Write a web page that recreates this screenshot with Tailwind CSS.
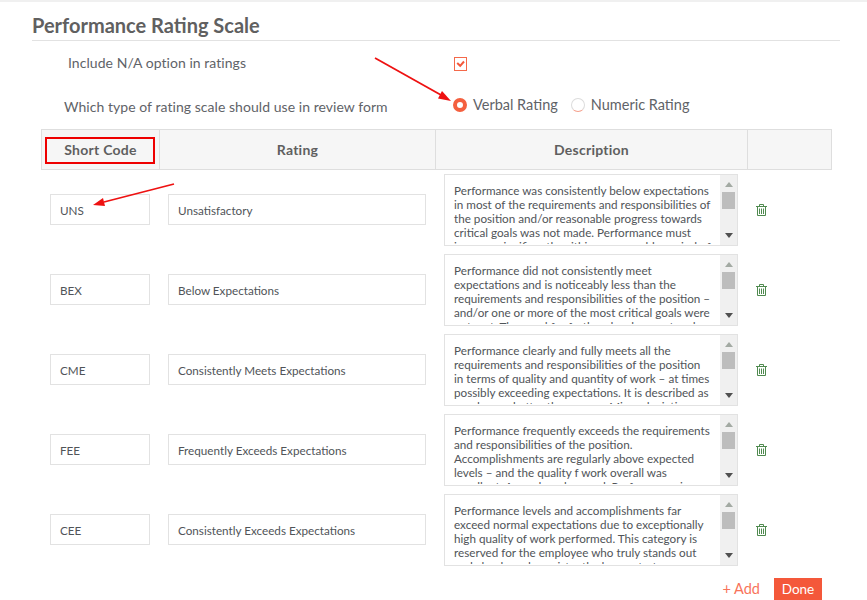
<!DOCTYPE html>
<html lang="en">
<head>
<meta charset="utf-8">
<title>Performance Rating Scale</title>
<script src="https://cdn.jsdelivr.net/npm/@tailwindcss/browser@4"></script>
</head>
<body class="bg-white font-['Lato','Open_Sans',sans-serif] text-[#5f6368]">
<div class="relative w-[867px] h-[600px] overflow-hidden">
  <div class="h-[2px] bg-[#f0f0f0]"></div>
  <div class="pl-[32px] pr-[27px]">
    <h1 class="h-[39px] pt-[8px] border-b border-[#e2e2e2] text-[20px] leading-[30px] font-bold text-[#606060]">Performance Rating Scale</h1>
  </div>
  <div class="flex h-[44px] items-start pt-[12px]">
    <div class="w-[454px] pl-[68px] text-[14px] tracking-[0.05px] leading-[20px]">Include N/A option in ratings</div>
    <div class="mt-[4px] w-[13px] h-[14px] border border-[#f4694a] flex items-center justify-center">
      <svg width="9" height="8" viewBox="0 0 9 8"><path d="M1.2 3 L4.2 5.8 L8 1.5" fill="none" stroke="#f4583a" stroke-width="2"/></svg>
    </div>
  </div>
  <div class="flex h-[44px] items-start">
    <div class="w-[453px] pl-[64px] pt-[12px] text-[14px] tracking-[0.05px] leading-[20px]">Which type of rating scale should use in review form</div>
    <div class="flex items-center pt-[10px] text-[14.5px] leading-[20px]">
      <span class="w-[14px] h-[14px] rounded-full border-[4px] border-[#f4603f] bg-white"></span>
      <span class="ml-[6px]">Verbal Rating</span>
      <span class="ml-[13px] w-[14px] h-[14px] rounded-full border border-[#dcdcdc] border-b-[#f4a08c] bg-white"></span>
      <span class="ml-[6px]">Numeric Rating</span>
    </div>
  </div>
  <div class="ml-[41px] w-[791px] h-[41px] flex border border-[#dedede] bg-[#f6f6f6] text-[14px] font-bold tracking-[0.25px] text-[#5f5f5f]">
    <div class="w-[118px] flex items-center justify-center border-r border-[#dedede]">Short Code</div>
    <div class="w-[276px] flex items-center justify-center border-r border-[#dedede]">Rating</div>
    <div class="w-[312px] flex items-center justify-center border-r border-[#dedede]">Description</div>
    <div class="flex-1"></div>
  </div>

  <div class="pt-[4px] flex flex-col gap-[8px]">
    <!-- row 1 -->
    <div class="flex items-center h-[72px] text-[11.7px] text-[#505458]">
      <div class="ml-[50px] -mt-[1px] w-[100px] h-[31px] border border-[#e2e2e2] pl-[9px] leading-[30px]">UNS</div>
      <div class="ml-[18px] -mt-[1px] w-[258px] h-[31px] border border-[#e2e2e2] pl-[9px] leading-[30px]">Unsatisfactory</div>
      <div class="ml-[18px] w-[294px] h-[72px] border border-[#e2e2e2] flex">
        <div class="flex-1 mb-[1px] overflow-hidden pl-[9px] pt-[8px] leading-[14px] whitespace-nowrap">Performance was consistently below expectations<br>in most of the requirements and responsibilities of<br>the position and/or reasonable progress towards<br>critical goals was not made. Performance must<br>improve significantly within a reasonable period of</div>
        <div class="w-[17px] bg-[#f0f0f0] relative flex flex-col items-center pt-[7px]">
          <svg width="8" height="5" viewBox="0 0 8 5"><path d="M4 0 L8 5 L0 5 Z" fill="#a3aaa3"/></svg>
          <div class="mt-[5px] w-[13px] h-[17px] bg-[#bdbdbd]"></div>
          <svg class="absolute bottom-[7px]" width="8" height="5" viewBox="0 0 8 5"><path d="M0 0 L8 0 L4 5 Z" fill="#505050"/></svg>
        </div>
      </div>
      <svg class="ml-[18px]" width="11" height="12" viewBox="0 0 11 12" fill="none" stroke="#4f8a4f" stroke-width="1"><path d="M0 2.5H11M3.5 2.5V0.5H7.5V2.5M1.5 2.5V11.5H9.5V2.5M3.5 4.5V10M5.5 4.5V10M7.5 4.5V10"/></svg>
    </div>
    <!-- row 2 -->
    <div class="flex items-center h-[72px] text-[11.7px] text-[#505458]">
      <div class="ml-[50px] -mt-[1px] w-[100px] h-[31px] border border-[#e2e2e2] pl-[9px] leading-[30px]">BEX</div>
      <div class="ml-[18px] -mt-[1px] w-[258px] h-[31px] border border-[#e2e2e2] pl-[9px] leading-[30px]">Below Expectations</div>
      <div class="ml-[18px] w-[294px] h-[72px] border border-[#e2e2e2] flex">
        <div class="flex-1 mb-[1px] overflow-hidden pl-[9px] pt-[8px] leading-[14px] whitespace-nowrap">Performance did not consistently meet<br>expectations and is noticeably less than the<br>requirements and responsibilities of the position –<br>and/or one or more of the most critical goals were<br>not met. The need for further development and</div>
        <div class="w-[17px] bg-[#f0f0f0] relative flex flex-col items-center pt-[7px]">
          <svg width="8" height="5" viewBox="0 0 8 5"><path d="M4 0 L8 5 L0 5 Z" fill="#a3aaa3"/></svg>
          <div class="mt-[5px] w-[13px] h-[17px] bg-[#bdbdbd]"></div>
          <svg class="absolute bottom-[7px]" width="8" height="5" viewBox="0 0 8 5"><path d="M0 0 L8 0 L4 5 Z" fill="#505050"/></svg>
        </div>
      </div>
      <svg class="ml-[18px]" width="11" height="12" viewBox="0 0 11 12" fill="none" stroke="#4f8a4f" stroke-width="1"><path d="M0 2.5H11M3.5 2.5V0.5H7.5V2.5M1.5 2.5V11.5H9.5V2.5M3.5 4.5V10M5.5 4.5V10M7.5 4.5V10"/></svg>
    </div>
    <!-- row 3 -->
    <div class="flex items-center h-[72px] text-[11.7px] text-[#505458]">
      <div class="ml-[50px] -mt-[1px] w-[100px] h-[31px] border border-[#e2e2e2] pl-[9px] leading-[30px]">CME</div>
      <div class="ml-[18px] -mt-[1px] w-[258px] h-[31px] border border-[#e2e2e2] pl-[9px] leading-[30px]">Consistently Meets Expectations</div>
      <div class="ml-[18px] w-[294px] h-[72px] border border-[#e2e2e2] flex">
        <div class="flex-1 mb-[1px] overflow-hidden pl-[9px] pt-[8px] leading-[14px] whitespace-nowrap">Performance clearly and fully meets all the<br>requirements and responsibilities of the position<br>in terms of quality and quantity of work – at times<br>possibly exceeding expectations. It is described as<br>good as, or better than, peers. Minor deviations</div>
        <div class="w-[17px] bg-[#f0f0f0] relative flex flex-col items-center pt-[7px]">
          <svg width="8" height="5" viewBox="0 0 8 5"><path d="M4 0 L8 5 L0 5 Z" fill="#a3aaa3"/></svg>
          <div class="mt-[5px] w-[13px] h-[17px] bg-[#bdbdbd]"></div>
          <svg class="absolute bottom-[7px]" width="8" height="5" viewBox="0 0 8 5"><path d="M0 0 L8 0 L4 5 Z" fill="#505050"/></svg>
        </div>
      </div>
      <svg class="ml-[18px]" width="11" height="12" viewBox="0 0 11 12" fill="none" stroke="#4f8a4f" stroke-width="1"><path d="M0 2.5H11M3.5 2.5V0.5H7.5V2.5M1.5 2.5V11.5H9.5V2.5M3.5 4.5V10M5.5 4.5V10M7.5 4.5V10"/></svg>
    </div>
    <!-- row 4 -->
    <div class="flex items-center h-[72px] text-[11.7px] text-[#505458]">
      <div class="ml-[50px] -mt-[1px] w-[100px] h-[31px] border border-[#e2e2e2] pl-[9px] leading-[30px]">FEE</div>
      <div class="ml-[18px] -mt-[1px] w-[258px] h-[31px] border border-[#e2e2e2] pl-[9px] leading-[30px]">Frequently Exceeds Expectations</div>
      <div class="ml-[18px] w-[294px] h-[72px] border border-[#e2e2e2] flex">
        <div class="flex-1 mb-[1px] overflow-hidden pl-[9px] pt-[8px] leading-[14px] whitespace-nowrap">Performance frequently exceeds the requirements<br>and responsibilities of the position.<br>Accomplishments are regularly above expected<br>levels – and the quality f work overall was<br>excellent. A good work record. Performance is</div>
        <div class="w-[17px] bg-[#f0f0f0] relative flex flex-col items-center pt-[7px]">
          <svg width="8" height="5" viewBox="0 0 8 5"><path d="M4 0 L8 5 L0 5 Z" fill="#a3aaa3"/></svg>
          <div class="mt-[5px] w-[13px] h-[17px] bg-[#bdbdbd]"></div>
          <svg class="absolute bottom-[7px]" width="8" height="5" viewBox="0 0 8 5"><path d="M0 0 L8 0 L4 5 Z" fill="#505050"/></svg>
        </div>
      </div>
      <svg class="ml-[18px]" width="11" height="12" viewBox="0 0 11 12" fill="none" stroke="#4f8a4f" stroke-width="1"><path d="M0 2.5H11M3.5 2.5V0.5H7.5V2.5M1.5 2.5V11.5H9.5V2.5M3.5 4.5V10M5.5 4.5V10M7.5 4.5V10"/></svg>
    </div>
    <!-- row 5 -->
    <div class="flex items-center h-[72px] text-[11.7px] text-[#505458]">
      <div class="ml-[50px] -mt-[1px] w-[100px] h-[31px] border border-[#e2e2e2] pl-[9px] leading-[30px]">CEE</div>
      <div class="ml-[18px] -mt-[1px] w-[258px] h-[31px] border border-[#e2e2e2] pl-[9px] leading-[30px]">Consistently Exceeds Expectations</div>
      <div class="ml-[18px] w-[294px] h-[72px] border border-[#e2e2e2] flex">
        <div class="flex-1 mb-[1px] overflow-hidden pl-[9px] pt-[8px] leading-[14px] whitespace-nowrap">Performance levels and accomplishments far<br>exceed normal expectations due to exceptionally<br>high quality of work performed. This category is<br>reserved for the employee who truly stands out<br>and clearly and consistently demonstrates</div>
        <div class="w-[17px] bg-[#f0f0f0] relative flex flex-col items-center pt-[7px]">
          <svg width="8" height="5" viewBox="0 0 8 5"><path d="M4 0 L8 5 L0 5 Z" fill="#a3aaa3"/></svg>
          <div class="mt-[5px] w-[13px] h-[17px] bg-[#bdbdbd]"></div>
          <svg class="absolute bottom-[7px]" width="8" height="5" viewBox="0 0 8 5"><path d="M0 0 L8 0 L4 5 Z" fill="#505050"/></svg>
        </div>
      </div>
      <svg class="ml-[18px]" width="11" height="12" viewBox="0 0 11 12" fill="none" stroke="#4f8a4f" stroke-width="1"><path d="M0 2.5H11M3.5 2.5V0.5H7.5V2.5M1.5 2.5V11.5H9.5V2.5M3.5 4.5V10M5.5 4.5V10M7.5 4.5V10"/></svg>
    </div>
  </div>

  <div class="flex justify-end items-center pr-[45px] mt-[12px]">
    <span class="text-[14.5px] text-[#f8735a] mr-[14px]">+ Add</span>
    <button class="w-[48px] h-[22px] bg-[#f4583a] text-white text-[13.5px] leading-[22px]">Done</button>
  </div>

  <!-- annotations -->
  <div class="absolute left-[45px] top-[137px] w-[110px] h-[27px] border-2 border-[#ee0000]"></div>
  <svg class="absolute left-0 top-0" width="867" height="600" viewBox="0 0 867 600" fill="none">
    <path d="M375 58 L441 95" stroke="#ee1111" stroke-width="1.8"/>
    <path d="M451 101 L438 98.5 L442 91 Z" fill="#ee1111"/>
    <path d="M174 184 L104 202" stroke="#ee1111" stroke-width="1.8"/>
    <path d="M93 205 L103 198 L105 206 Z" fill="#ee1111"/>
  </svg>
</div>
</body>
</html>
